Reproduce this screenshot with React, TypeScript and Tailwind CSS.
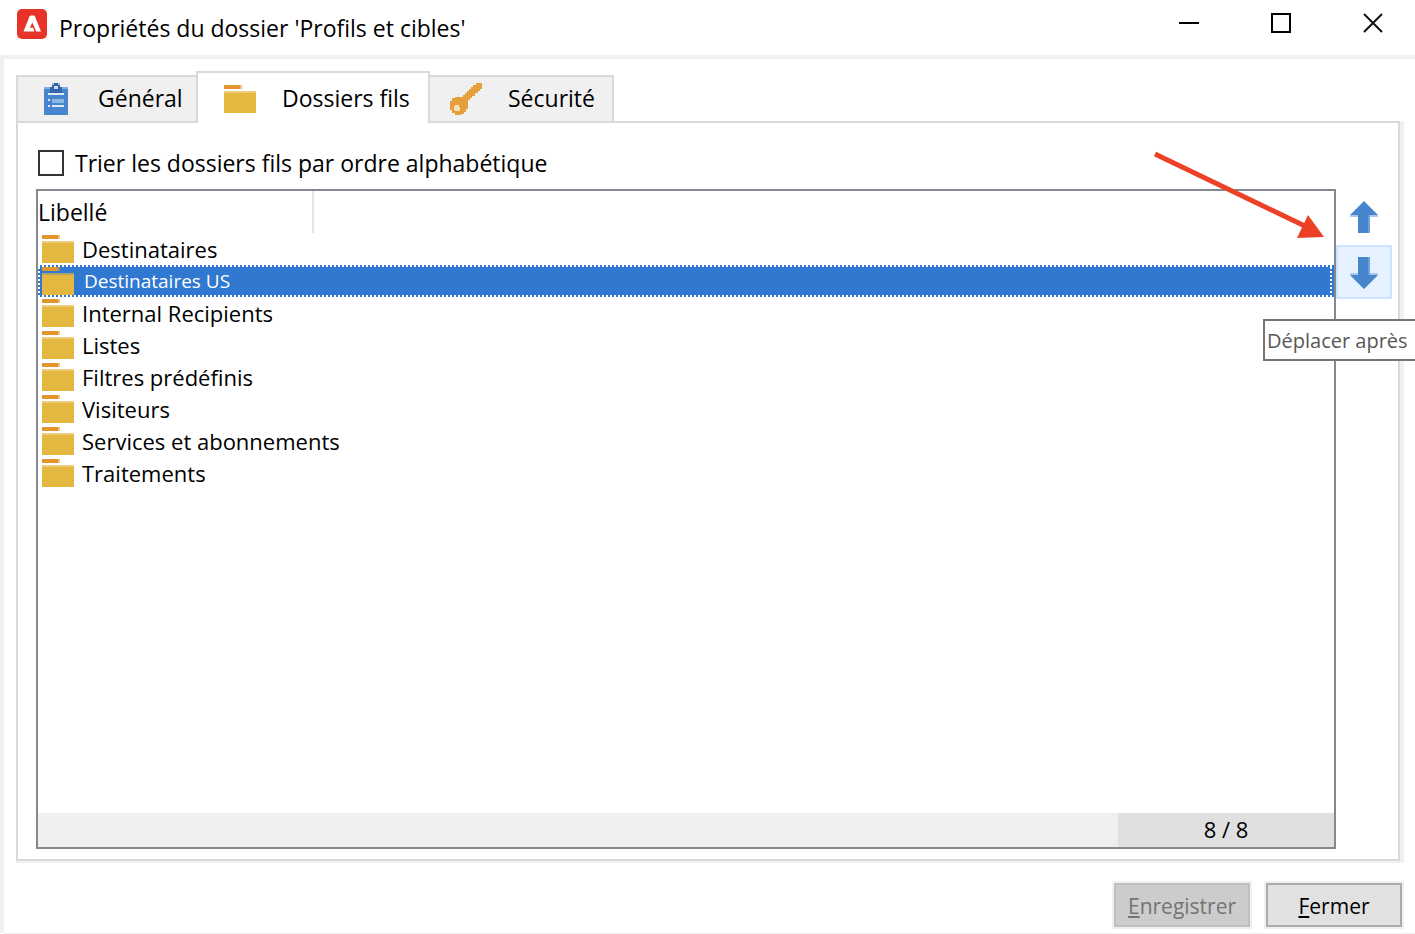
import React from "react";

const folders = [
  { label: "Destinataires", selected: false },
  { label: "Destinataires US", selected: true },
  { label: "Internal Recipients", selected: false },
  { label: "Listes", selected: false },
  { label: "Filtres prédéfinis", selected: false },
  { label: "Visiteurs", selected: false },
  { label: "Services et abonnements", selected: false },
  { label: "Traitements", selected: false },
];

function AppLogo() {
  return (
    <svg width="30" height="30" viewBox="0 0 30 30" aria-hidden="true">
      <rect width="30" height="30" rx="5" fill="#e83428" />
      <path
        d="M6.500 22.500L12.500 7.500Q13 6.500 14 6.500h2.500Q17.500 6.500 18 7.500L24 22.500h-4.800L15.300 13.500l-2.300 5.300h3l1.400 3.700z"
        fill="#fff"
      />
    </svg>
  );
}

function FolderIcon() {
  return (
    <svg width="32" height="28" viewBox="0 0 32 28" className="shrink-0" shapeRendering="crispEdges" aria-hidden="true">
      <rect width="16" height="4" fill="#e0952f" />
      <rect x="16" width="2" height="4" fill="#e0952f" fillOpacity="0.6" />
      <rect y="6" width="32" height="2" fill="#e4b740" fillOpacity="0.7" />
      <rect y="8" width="32" height="20" fill="#e4b740" />
    </svg>
  );
}

function ClipboardIcon() {
  return (
    <svg width="24" height="32" viewBox="0 0 24 32" className="mx-1" shapeRendering="crispEdges" aria-hidden="true">
      <rect y="4" width="24" height="28" fill="#4786cd" />
      <path d="M0 4h6v2H0zM18 4h6v2h-6z" fill="#86aedd" />
      <path d="M4 10h16v2H4z" fill="#dce8f5" />
      <path d="M8 2h2V0h4v2h2v2h2v6H6V4h2z" fill="#3365a8" />
      <path d="M8 0h2v2H8zM14 0h2v2h-2z" fill="#9db6d6" />
      <path d="M10 3h4v3h-4z" fill="#c7d6ea" />
      <path d="M4 16h2v2H4zM4 22h2v2H4zM8 22h12v2H8z" fill="#dce8f5" />
      <path d="M8 16h12v4H8z" fill="#8fb6e2" />
    </svg>
  );
}

function KeyIcon() {
  return (
    <svg width="32" height="32" viewBox="0 0 32 32" shapeRendering="crispEdges" aria-hidden="true">
      <path
        d="M26 0h6v6h-2v2h-2v2h-3v3h-3v2h-2v2h-2v9h-2v3h-2v2h-3v1H5v-2H2v-3H0v-9h2v-3h3v-1h8v-2h2v-2h2v-2h2V6h2V4h2V2h3z"
        fill="#e5a03c"
      />
      <path d="M5 22h4v2h1v4H5v-1H4v-4h1z" fill="#f5dfbd" />
    </svg>
  );
}

function ArrowIcon({ down = false }: { down?: boolean }) {
  return (
    <svg width="28" height="32" viewBox="0 0 28 32" className={down ? "-scale-y-100" : ""} aria-hidden="true">
      <path d="M0 14h28v2H0z" fill="#a9c8ec" />
      <path d="M18 14h2v18h-2z" fill="#6ea0dc" />
      <path d="M14 0L28 14H18v18H8V14H0z" fill="#4786cd" />
    </svg>
  );
}

export default function App() {
  return (
    <main className="flex min-h-screen flex-col overflow-x-hidden bg-white font-['Open_Sans','Noto_Sans',sans-serif] text-[22px] leading-8 text-black">
      <header className="flex h-[55px] shrink-0 items-start justify-between pl-[17px]">
        <div className="flex gap-3 pt-[9px]">
          <AppLogo />
          <h1 className="pt-[3px] text-[23px]">Propriétés du dossier 'Profils et cibles'</h1>
        </div>
        <div className="flex">
          <button aria-label="Réduire" className="flex h-[46px] w-[92px] items-center justify-center">
            <svg width="20" height="20" aria-hidden="true"><path d="M0 9h20v2H0z" /></svg>
          </button>
          <button aria-label="Agrandir" className="flex h-[46px] w-[92px] items-center justify-center">
            <svg width="20" height="20" aria-hidden="true"><path d="M1 1h18v18H1z" fill="none" stroke="#000" strokeWidth="2" /></svg>
          </button>
          <button aria-label="Fermer la fenêtre" className="flex h-[46px] w-[88px] items-center justify-center pl-1">
            <svg width="20" height="20" aria-hidden="true"><path d="M1 1l18 18M19 1L1 19" fill="none" stroke="#111" strokeWidth="2" /></svg>
          </button>
        </div>
      </header>

      <div className="flex grow flex-col border-t-4 border-l-4 border-[#f0f0f0] pt-3 pr-[11px] pb-1 pl-3">
        <div role="tablist" className="flex h-[50px] items-end text-[23px]">
          <button role="tab" aria-selected="false" className="flex h-[46px] w-[180px] items-center gap-[26px] border-t-2 border-l-2 border-[#d9d9d9] bg-[#f0f0f0] pl-[22px]">
            <ClipboardIcon />
            <span className="pb-0.5">Général</span>
          </button>
          <button role="tab" aria-selected="true" className="relative z-10 -mb-0.5 flex h-[52px] w-[234px] items-center gap-[26px] border-x-2 border-t-2 border-[#d9d9d9] bg-white pt-0.5 pl-[26px]">
            <FolderIcon />
            <span className="pb-0.5">Dossiers fils</span>
          </button>
          <button role="tab" aria-selected="false" className="flex h-[46px] w-[184px] items-center gap-[26px] border-t-2 border-r-2 border-[#d9d9d9] bg-[#f0f0f0] pl-5">
            <KeyIcon />
            <span className="pb-0.5">Sécurité</span>
          </button>
        </div>

        <div className="flex grow flex-col bg-[#f0f0f0] pr-1 pb-0.5">
          <section role="tabpanel" className="flex grow flex-col border-2 border-[#d9d9d9] bg-white pt-6 pb-2.5 pl-[18px]">
            <label className="flex h-8 items-center gap-[11px] self-start pl-0.5 text-[23px]">
              <input type="checkbox" className="size-[26px] appearance-none border-2 border-[#333] bg-white" />
              Trier les dossiers fils par ordre alphabétique
            </label>

            <div className="mt-2.5 flex grow">
              <div className="flex grow flex-col border-2 border-[#848891]">
                <table className="w-full table-fixed border-separate border-spacing-0 text-left">
                  <thead>
                    <tr className="h-[42px]">
                      <th className="w-[276px] border-r-2 border-[#e5e5e5] p-0 text-[23px] font-normal">Libellé</th>
                      <th className="p-0" />
                    </tr>
                  </thead>
                  <tbody>
                    {folders.map((f) => (
                      <tr key={f.label} aria-selected={f.selected}>
                        <td colSpan={2} className="p-0">
                          {f.selected ? (
                            <div className="relative flex h-8 items-center gap-2.5 bg-[#3078d0] pl-1 text-[19px] text-white">
                              <div className="pointer-events-none absolute inset-x-0 top-0 h-0.5 bg-[repeating-linear-gradient(90deg,#fff_0_2px,transparent_2px_4px)]" />
                              <div className="pointer-events-none absolute inset-x-0 bottom-0 h-0.5 bg-[repeating-linear-gradient(90deg,#fff_0_2px,transparent_2px_4px)]" />
                              <div className="pointer-events-none absolute inset-y-0 left-0 w-0.5 bg-[repeating-linear-gradient(0deg,#fff_0_2px,transparent_2px_4px)]" />
                              <div className="pointer-events-none absolute inset-y-0 right-0.5 w-0.5 bg-[repeating-linear-gradient(0deg,#fff_0_2px,transparent_2px_4px)]" />
                              <FolderIcon />
                              {f.label}
                            </div>
                          ) : (
                            <div className="flex h-8 items-center gap-2 pl-1">
                              <FolderIcon />
                              {f.label}
                            </div>
                          )}
                        </td>
                      </tr>
                    ))}
                  </tbody>
                </table>
                <div className="mt-auto flex h-[34px] justify-end bg-[#efefef]">
                  <div className="w-[216px] bg-[#e0e0e0] text-center">8 / 8</div>
                </div>
              </div>

              <div className="relative flex w-[62px] shrink-0 flex-col gap-0.5">
                <button aria-label="Déplacer avant" className="flex h-[54px] w-14 items-center justify-center pt-0.5">
                  <ArrowIcon />
                </button>
                <button aria-label="Déplacer après" className="flex h-[54px] w-14 items-center justify-center border-2 border-[#cce4ff] bg-[#e6f2ff] pt-0.5">
                  <ArrowIcon down />
                </button>
                <svg width="180" height="90" viewBox="0 0 180 90" className="pointer-events-none absolute -top-10 right-[69px]" aria-hidden="true">
                  <path d="M6 5L160 79" stroke="#ed4127" strokeWidth="5" />
                  <path d="M175 88L159 66L148 89z" fill="#ed4127" />
                </svg>
                <div role="tooltip" className="absolute top-[130px] -right-[19px] h-[42px] w-[154px] border-2 border-[#767676] bg-white pl-0.5 text-[20px] leading-10 whitespace-nowrap text-[#575757]">
                  Déplacer après
                </div>
              </div>
            </div>
          </section>
        </div>

        <footer className="mt-[18px] flex justify-end gap-3 text-[21px]">
          <button disabled className="h-12 w-[140px] border-2 border-[#f0f0f0] bg-[#cccccc] text-[#747474]">
            <span className="flex h-11 items-center justify-center border-2 border-[#bfbfbf] pt-0.5">
              <span><span className="underline decoration-2 underline-offset-2">E</span>nregistrer</span>
            </span>
          </button>
          <button className="h-12 w-[140px] border-2 border-[#f0f0f0] bg-[#e1e1e1]">
            <span className="flex h-11 items-center justify-center border-2 border-[#acacac] pt-0.5">
              <span><span className="underline decoration-2 underline-offset-2">F</span>ermer</span>
            </span>
          </button>
        </footer>
      </div>
      <div className="ml-1 h-px bg-[#f0f0f0]" />
    </main>
  );
}
